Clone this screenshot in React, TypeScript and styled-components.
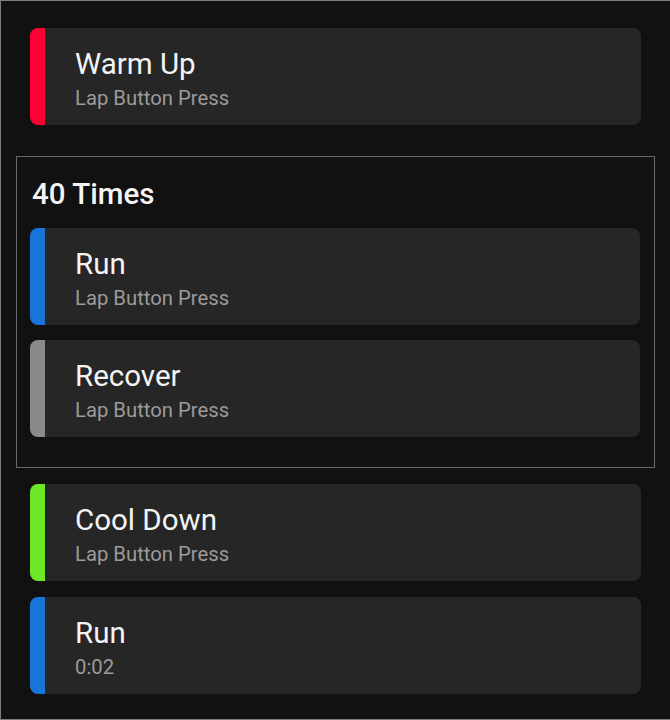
import React from "react";
import styled, { createGlobalStyle } from "styled-components";

interface Step {
  id: string;
  name: string;
  detail: string;
  color: string;
}

interface Repeat {
  id: string;
  times: number;
  steps: Step[];
}

type Item = Step | Repeat;

const GlobalStyle = createGlobalStyle`
  html, body {
    margin: 0;
    padding: 0;
    background: #111111;
  }
  body {
    font-family: Roboto, "Noto Sans", "Liberation Sans", sans-serif;
  }
`;

const Frame = styled.div`
  box-sizing: border-box;
  width: 671px;
  height: 720px;
  border: 1px solid #7c7c7c;
  background: #111111;
  padding: 27px 15px 0 15px;
  display: flex;
  flex-direction: column;
  gap: 16px;
  overflow: hidden;
`;

const Card = styled.div<{ $color: string }>`
  box-sizing: border-box;
  margin: 0 14px;
  height: 97px;
  border-radius: 8px;
  background: #262626;
  border-left: 15px solid ${(p) => p.$color};
  padding: 19px 0 0 30px;
  display: flex;
  flex-direction: column;
  gap: 5px;
`;

const Title = styled.div`
  font-size: 29.5px;
  line-height: 34px;
  color: #f4f4f4;
`;

const Detail = styled.div`
  font-size: 20.3px;
  line-height: 24px;
  color: #9a9a9a;
`;

const Group = styled.div`
  margin-top: 15px;
  border: 1px solid #6a6a6a;
  padding: 20px 0 30px 0;
  display: flex;
  flex-direction: column;
  gap: 15px;
`;

const GroupTitle = styled.div`
  font-size: 29.5px;
  line-height: 34px;
  font-weight: 500;
  color: #f4f4f4;
  padding-left: 15px;
  margin-bottom: 2px;
`;

const GroupCard = styled(Card)`
  margin: 0 14px 0 13px;
`;

const items: Item[] = [
  { id: "warm", name: "Warm Up", detail: "Lap Button Press", color: "#ff0034" },
  {
    id: "rep",
    times: 40,
    steps: [
      { id: "run1", name: "Run", detail: "Lap Button Press", color: "#1a74d8" },
      { id: "rec", name: "Recover", detail: "Lap Button Press", color: "#8a8a8a" },
    ],
  },
  { id: "cool", name: "Cool Down", detail: "Lap Button Press", color: "#6ee724" },
  { id: "run2", name: "Run", detail: "0:02", color: "#1a74d8" },
];

const StepCard: React.FC<{ step: Step; inGroup?: boolean }> = ({ step, inGroup }) => {
  const Box = inGroup ? GroupCard : Card;
  return (
    <Box $color={step.color}>
      <Title>{step.name}</Title>
      <Detail>{step.detail}</Detail>
    </Box>
  );
};

const App: React.FC = () => {
  return (
    <>
      <GlobalStyle />
      <Frame>
        {items.map((item) =>
          "steps" in item ? (
            <Group key={item.id}>
              <GroupTitle>{item.times} Times</GroupTitle>
              {item.steps.map((s) => (
                <StepCard step={s} key={s.id} inGroup />
              ))}
            </Group>
          ) : (
            <StepCard step={item} key={item.id} />
          )
        )}
      </Frame>
    </>
  );
};

export default App;
